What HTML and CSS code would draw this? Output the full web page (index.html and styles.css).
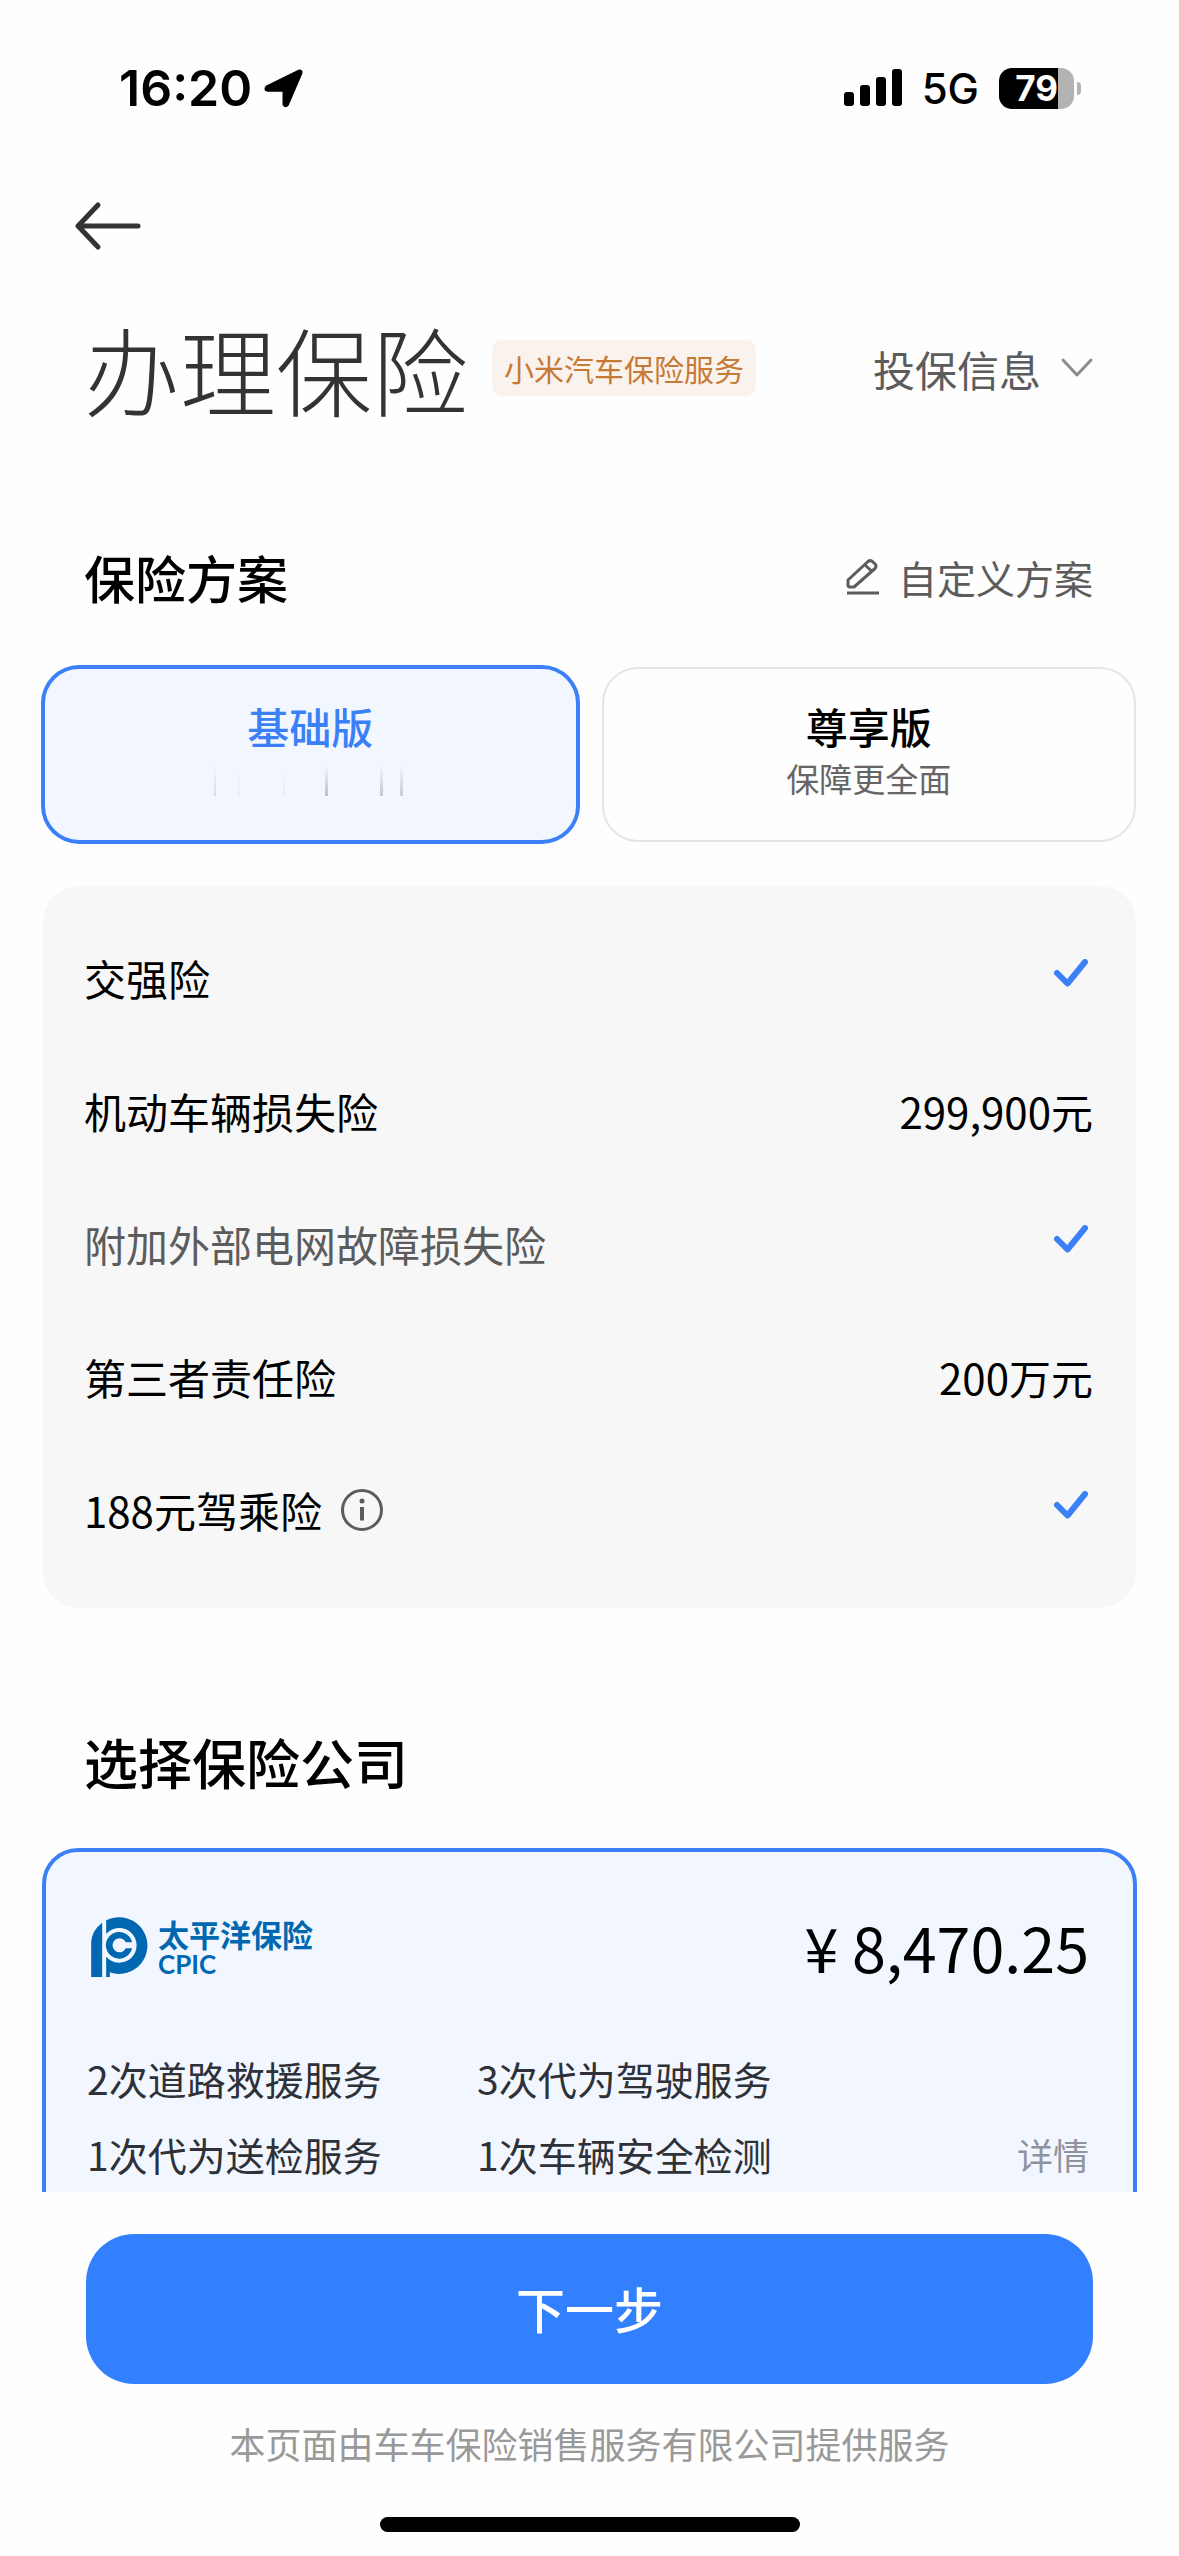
FILE: index.html
```html
<!DOCTYPE html>
<html lang="zh-CN">
<head>
  <meta charset="utf-8">
  <meta name="viewport" content="width=device-width, initial-scale=1">
  <title>办理保险</title>
  <link rel="stylesheet" href="styles.css">
</head>
<body>
  <div class="app">
    <div class="status">
      <div class="status-left">
        <span class="time">16:20</span>
        <svg width="40" height="40" viewBox="0 0 40 40" aria-hidden="true"><path d="M3.500 18.500 35 3.200Q37.500 2.500 37 5L23.500 36.500Q21.500 39 20 36.500V22.300H4Q0 21.500 3.500 18.500Z" stroke="#000" stroke-width="3" stroke-linejoin="round"/></svg>
      </div>
      <div class="status-right">
        <svg width="58" height="38" viewBox="0 0 58 38" aria-hidden="true"><rect y="23" width="10" height="14" rx="3"/><rect x="16" y="16" width="10" height="21" rx="3"/><rect x="32" y="8" width="10" height="29" rx="3"/><rect x="48" width="10" height="37" rx="3"/></svg>
        <span class="network">5G</span>
        <div class="battery"><span class="battery-level">79</span></div>
      </div>
    </div>

    <main class="content">
      <nav class="nav">
        <button class="back" type="button" aria-label="返回">
          <svg width="68" height="50" viewBox="0 0 68 50" fill="none" stroke="#333" stroke-width="5" stroke-linecap="round" stroke-linejoin="round" aria-hidden="true"><path d="M24 4 4 25 24 46M4 25H64"/></svg>
        </button>
      </nav>

      <header class="title-row">
        <h1 class="title">办理保险</h1>
        <span class="badge">小米汽车保险服务</span>
        <button class="link info-link" type="button">投保信息
          <svg width="32" height="20" viewBox="0 0 32 20" fill="none" stroke="#8c8c8c" stroke-width="3" stroke-linecap="round" stroke-linejoin="round" aria-hidden="true"><path d="M2 2 16 17 30 2"/></svg>
        </button>
      </header>

      <section>
        <div class="section-head">
          <h2 class="heading">保险方案</h2>
          <button class="link custom-link" type="button">
            <svg width="36" height="38" viewBox="0 0 36 38" fill="none" stroke="#5c5c5c" stroke-width="3" stroke-linecap="round" stroke-linejoin="round" aria-hidden="true"><path d="M2 35H34" stroke-linecap="butt"/><path d="M3 28V22L23 3.500Q25.500 1.500 28 4L30 6Q32 8 30 10.500L9 29H4ZM20 7 26.500 13"/></svg>
            自定义方案</button>
        </div>

        <div class="plans">
          <label class="plan">
            <input class="plan-radio" type="radio" name="plan" checked>
            <span class="plan-name">基础版</span>
            <svg class="plan-fade" width="192" height="52" viewBox="0 0 192 52" aria-hidden="true">
              <defs><linearGradient id="fade" x1="0" y1="0" x2="0" y2="1"><stop offset="0" stop-color="#555" stop-opacity="0"/><stop offset="1" stop-color="#555"/></linearGradient></defs>
              <g fill="url(#fade)"><rect x="0" y="13" width="2" height="31" opacity=".16"/><rect x="24" y="13" width="2" height="31" opacity=".06"/><rect x="69" y="13" width="2" height="31" opacity=".06"/><rect x="111" y="13" width="3" height="31" opacity=".34"/><rect x="166" y="13" width="3" height="31" opacity=".3"/><rect x="186" y="13" width="3" height="31" opacity=".26"/></g>
            </svg>
          </label>
          <label class="plan">
            <input class="plan-radio" type="radio" name="plan">
            <span class="plan-name">尊享版</span>
            <span class="plan-note">保障更全面</span>
          </label>
        </div>

        <dl class="coverage">
          <div class="row"><dt>交强险</dt><dd><svg class="check" viewBox="0 0 34 28" role="img" aria-label="包含"><path d="M3 14 13.500 24.500 31 3"/></svg></dd></div>
          <div class="row"><dt>机动车辆损失险</dt><dd>299,900元</dd></div>
          <div class="row"><dt class="sub">附加外部电网故障损失险</dt><dd><svg class="check" viewBox="0 0 34 28" role="img" aria-label="包含"><path d="M3 14 13.500 24.500 31 3"/></svg></dd></div>
          <div class="row"><dt>第三者责任险</dt><dd>200万元</dd></div>
          <div class="row">
            <dt>188元驾乘险
              <button class="tip" type="button" aria-label="说明"><svg width="44" height="44" viewBox="0 0 44 44" aria-hidden="true"><circle cx="22" cy="22" r="19.500" fill="none" stroke="#5c5c5c" stroke-width="3"/><circle cx="22" cy="13" r="2.500" fill="#5c5c5c"/><path d="M22 19V32.500" stroke="#5c5c5c" stroke-width="4"/></svg></button>
            </dt>
            <dd><svg class="check" viewBox="0 0 34 28" role="img" aria-label="包含"><path d="M3 14 13.500 24.500 31 3"/></svg></dd>
          </div>
        </dl>
      </section>

      <section>
        <h2 class="heading company-heading">选择保险公司</h2>
        <article class="company">
          <div class="company-head">
            <div class="brand">
              <svg width="57" height="60" viewBox="0 0 170 180" fill="#0068b0" aria-hidden="true">
                <path d="M0 180V76Q2 40 33 17V180Z"/>
                <path d="M45 10A85 85 0 1 1 56 166V180H45V119A52 52 0 1 0 45 51Z"/>
                <path d="M123 76A40 40 0 1 0 123 94H104A21 21 0 1 1 104 76Z"/>
              </svg>
              <div class="brand-text"><span class="brand-cn">太平洋保险</span><span class="brand-en">CPIC</span></div>
            </div>
            <span class="price">¥ 8,470.25</span>
          </div>
          <div class="company-body">
            <ul class="services">
              <li>2次道路救援服务</li>
              <li>3次代为驾驶服务</li>
              <li>1次代为送检服务</li>
              <li>1次车辆安全检测</li>
            </ul>
            <a class="more" href="#details">详情</a>
          </div>
        </article>
      </section>
    </main>

    <footer class="footer">
      <button class="next" type="button">下一步</button>
      <p class="provider">本页面由车车保险销售服务有限公司提供服务</p>
      <div class="home-bar"></div>
    </footer>
  </div>
</body>
</html>
```
FILE: styles.css
```css
* { box-sizing: border-box; }

body, h1, h2, p, ul, dl, dd { margin: 0; padding: 0; }

body {
  background: #fefefe;
  color: #000;
  font-family: "Noto Sans CJK SC", sans-serif;
  font-size: 42px;
}

button {
  border: 0;
  padding: 0;
  background: none;
  font: inherit;
  color: inherit;
}

svg { display: block; flex: none; }

.app {
  display: flex;
  flex-direction: column;
  height: 100vh;
}

/* Status bar */
.status {
  display: flex;
  flex: none;
  justify-content: space-between;
  align-items: center;
  height: 176px;
  padding: 0 105px 0 119px;
  font-family: Inter, sans-serif;
}

.status-left, .status-right { display: flex; align-items: center; }
.status-left { gap: 12px; }
.time { font-size: 50px; font-weight: 600; }
.network { margin: 0 20px; font-size: 42px; font-weight: 500; }

.battery {
  position: relative;
  display: flex;
  width: 75px;
  height: 41px;
  border-radius: 13px;
  background: linear-gradient(90deg, #000 79%, #b3b3b3 79%);
}

.battery::after {
  content: "";
  position: absolute;
  left: 78px;
  top: 14px;
  width: 4px;
  height: 13px;
  border-radius: 0 4px 4px 0;
  background: #b3b3b3;
}

.battery-level {
  width: 100%;
  color: #fff;
  font-size: 35px;
  font-weight: 700;
  line-height: 41px;
  text-align: center;
}

/* Scrolling content */
.content {
  flex: 1;
  min-height: 0;
  overflow-y: auto;
  scrollbar-width: none;
  padding: 0 43px;
}

.nav {
  display: flex;
  align-items: center;
  height: 100px;
  padding-left: 31px;
}

.title-row, .section-head {
  display: flex;
  align-items: center;
  padding: 0 43px 0 41px;
}

.title-row { height: 184px; }

.title {
  color: #333;
  font-size: 96px;
  font-weight: 300;
  line-height: 108px;
}

.badge {
  margin-left: 24px;
  padding: 0 12px;
  border-radius: 10px;
  background: #faf3ed;
  color: #c77a35;
  font-size: 30px;
  line-height: 56px;
}

.link {
  display: flex;
  align-items: center;
  margin-left: auto;
  color: #5c5c5c;
}

.info-link { gap: 20px; font-size: 42px; }
.custom-link { gap: 17px; font-size: 39px; }

.section-head { margin-top: 82px; }

.heading {
  font-size: 51px;
  font-weight: 500;
  line-height: 70px;
}

/* Plan choice */
.plans {
  display: grid;
  grid-template-columns: 1fr 1fr;
  gap: 24px;
  margin-top: 55px;
}

.plan {
  display: flex;
  flex-direction: column;
  align-items: center;
  justify-content: center;
  min-height: 175px;
  padding-bottom: 6px;
  border: 2px solid #e5e5e5;
  border-radius: 36px;
  line-height: 52px;
}

.plan:has(:checked) {
  border-color: #3b80f7;
  box-shadow: 0 0 0 2px #3b80f7;
  background: #f2f7ff;
  color: #3b80f7;
}

.plan-radio { position: absolute; opacity: 0; }
.plan-name { font-weight: 500; }
.plan-note { color: #666; font-size: 33px; }

/* Coverage list */
.coverage {
  margin-top: 44px;
  padding: 25px 43px 32px 41px;
  border-radius: 36px;
  background: #f7f7f7;
}

.row {
  display: flex;
  align-items: center;
  justify-content: space-between;
  height: 133px;
}

.row dt { display: flex; align-items: center; gap: 18px; }
.row .sub { color: #5c5c5c; }

.check {
  width: 34px;
  height: 38px;
  margin-right: 5px;
  padding-bottom: 10px;
  fill: none;
  stroke: #3b80f7;
  stroke-width: 6;
  stroke-linecap: round;
  stroke-linejoin: round;
}

/* Insurance company */
.company-heading {
  margin-top: 114px;
  padding: 0 41px;
  font-size: 54px;
  line-height: 80px;
}

.company {
  margin: 46px -1px 0;
  padding: 48px 44px 48px 41px;
  border: 4px solid #3b80f7;
  border-radius: 36px;
  background: #f2f7ff;
}

.company-head {
  display: flex;
  align-items: center;
  justify-content: space-between;
  height: 94px;
}

.brand { display: flex; align-items: center; gap: 10px; padding-left: 4px; color: #0068b0; }
.brand-text { display: flex; flex-direction: column; font-weight: 700; }
.brand-cn { font-size: 31px; line-height: 34px; }
.brand-en { font-family: Lato, sans-serif; font-size: 26px; line-height: 26px; }
.price { font-size: 61px; line-height: 80px; }

.company-body {
  display: flex;
  align-items: flex-end;
  justify-content: space-between;
  margin-top: 46px;
  line-height: 76px;
}

.services {
  display: grid;
  grid-template-columns: 390px auto;
  color: #2e3138;
  font-size: 39px;
  list-style: none;
}

.more { color: #8f939c; font-size: 36px; text-decoration: none; }

/* Bottom bar */
.footer {
  display: flex;
  flex: none;
  flex-direction: column;
  align-items: center;
  padding: 42px 86px 24px;
}

.next {
  width: 100%;
  height: 150px;
  padding-bottom: 4px;
  border-radius: 48px;
  background: #3380ff;
  color: #fff;
  font-size: 49px;
  font-weight: 500;
}

.provider {
  margin-top: 33px;
  color: #999;
  font-size: 36px;
  line-height: 52px;
}

.home-bar {
  width: 420px;
  height: 15px;
  margin-top: 48px;
  border-radius: 8px;
  background: #000;
}
```
